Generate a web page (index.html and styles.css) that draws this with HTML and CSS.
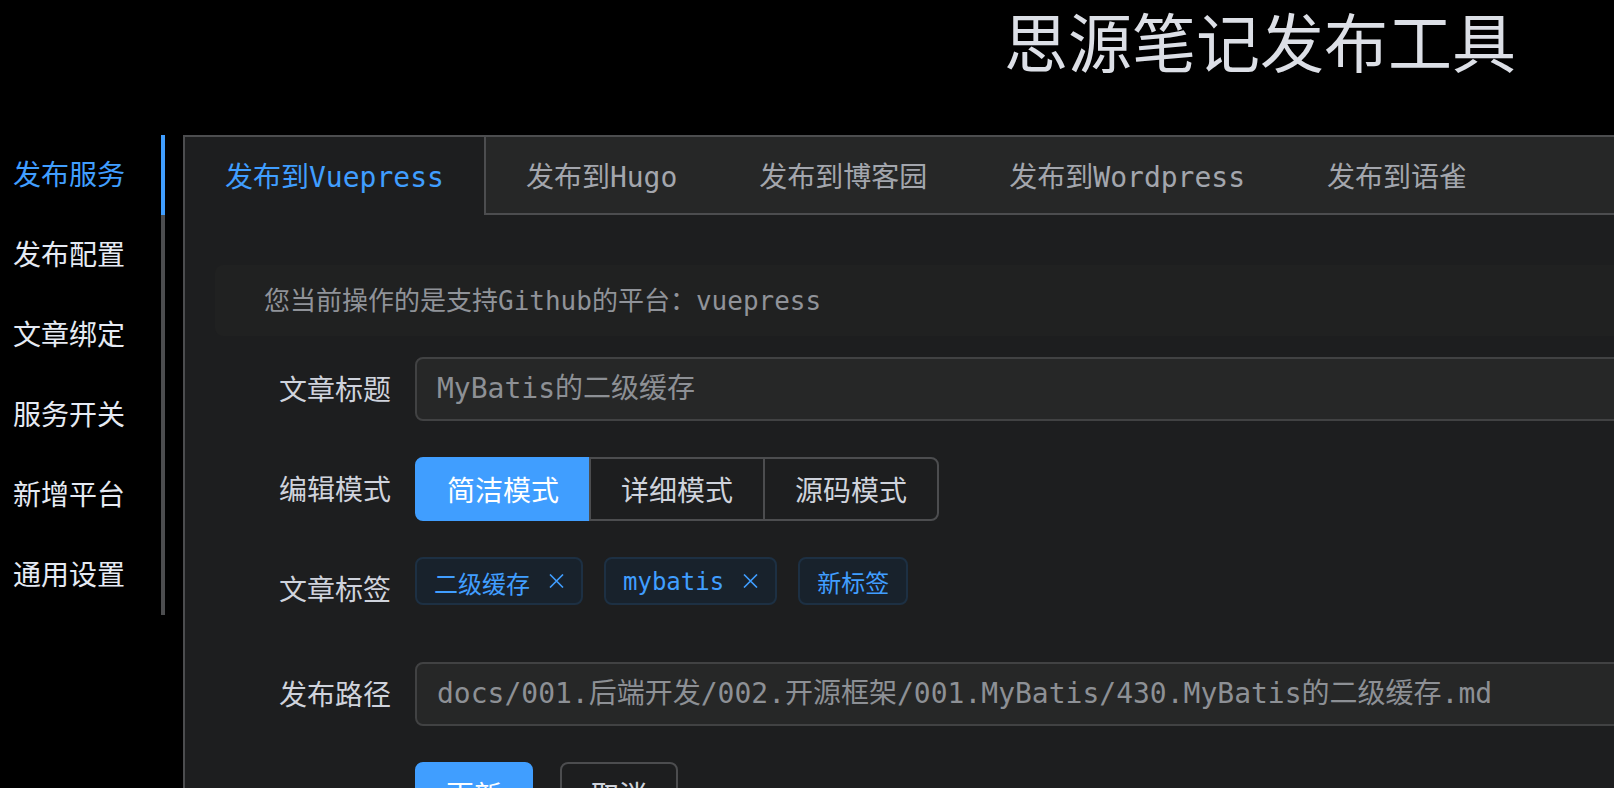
FILE: index.html
```html
<!DOCTYPE html>
<html lang="zh-CN">
<head>
<meta charset="utf-8">
<title>思源笔记发布工具</title>
<link rel="stylesheet" href="styles.css">
</head>
<body>
<header class="top">
  <h1 class="title">思源笔记发布工具</h1>
</header>
<div class="layout">
  <nav class="side">
    <div class="side-item active">发布服务</div>
    <div class="side-item">发布配置</div>
    <div class="side-item">文章绑定</div>
    <div class="side-item">服务开关</div>
    <div class="side-item">新增平台</div>
    <div class="side-item">通用设置</div>
  </nav>
  <section class="panel">
    <div class="tabs">
      <div class="tab active">发布到Vuepress</div>
      <div class="tab">发布到Hugo</div>
      <div class="tab">发布到博客园</div>
      <div class="tab">发布到Wordpress</div>
      <div class="tab">发布到语雀</div>
    </div>
    <div class="panel-body">
      <div class="alert">您当前操作的是支持Github的平台：vuepress</div>
      <div class="form">
        <div class="row">
          <div class="label">文章标题</div>
          <div class="control"><div class="input">MyBatis的二级缓存</div></div>
        </div>
        <div class="row">
          <div class="label">编辑模式</div>
          <div class="control">
            <div class="radio-group">
              <span class="radio active">简洁模式</span>
              <span class="radio">详细模式</span>
              <span class="radio">源码模式</span>
            </div>
          </div>
        </div>
        <div class="row row-tags">
          <div class="label">文章标签</div>
          <div class="control tags">
            <span class="tag">二级缓存<svg class="tag-close" viewBox="0 0 15 14" width="15" height="14"><path d="M1 0.5 L14 13.5 M14 0.5 L1 13.5" fill="none" stroke="currentColor" stroke-width="1.6"/></svg></span>
            <span class="tag">mybatis<svg class="tag-close" viewBox="0 0 15 14" width="15" height="14"><path d="M1 0.5 L14 13.5 M14 0.5 L1 13.5" fill="none" stroke="currentColor" stroke-width="1.6"/></svg></span>
            <span class="tag tag-new">新标签</span>
          </div>
        </div>
        <div class="row">
          <div class="label">发布路径</div>
          <div class="control"><div class="input">docs/001.后端开发/002.开源框架/001.MyBatis/430.MyBatis的二级缓存.md</div></div>
        </div>
        <div class="row actions">
          <span class="btn btn-primary">更新</span>
          <span class="btn">取消</span>
        </div>
      </div>
    </div>
  </section>
</div>
</body>
</html>
```

FILE: styles.css
```css
html, body {
  margin: 0;
  padding: 0;
}

body {
  background: #000;
  width: 1614px;
  height: 788px;
  overflow: hidden;
  font-family: "DejaVu Sans Mono", "Noto Sans CJK SC", monospace;
  color: #cfd3dc;
}

.top {
  height: 135px;
  box-sizing: border-box;
  padding-top: 7px;
  padding-left: 1004px;
}

.title {
  margin: 0;
  font-family: "Noto Sans CJK SC", sans-serif;
  font-weight: 400;
  font-size: 64px;
  line-height: 64px;
  color: #dcdfe6;
  white-space: nowrap;
}

.layout {
  display: flex;
  align-items: flex-start;
  gap: 18px;
}

.side {
  width: 165px;
  flex: none;
  display: flex;
  flex-direction: column;
}

.side-item {
  height: 80px;
  line-height: 76px;
  box-sizing: border-box;
  padding-left: 13px;
  border-right: 4px solid #4c4d4f;
  font-family: "Noto Sans CJK SC", sans-serif;
  font-size: 28px;
  color: #e5eaf3;
}

.side-item.active {
  color: #409eff;
  border-right-color: #409eff;
}

.panel {
  flex: none;
  width: 1700px;
  height: 700px;
  border: 2px solid #4c4d4f;
  background: #1d1e1f;
}

.tabs {
  display: flex;
  height: 76px;
  background: #262727;
  border-bottom: 2px solid #4c4d4f;
}

.tab {
  height: 76px;
  box-sizing: border-box;
  padding: 6px 40px 0 40px;
  line-height: 70px;
  border-left: 2px solid transparent;
  border-right: 2px solid transparent;
  margin-left: -2px;
  font-size: 28px;
  color: #a3a6ad;
  white-space: nowrap;
}

.tab:first-child {
  margin-left: 0;
  border-left: 0;
}

.tab.active {
  color: #409eff;
  background: #1d1e1f;
  border-right-color: #4c4d4f;
  height: 78px;
  margin-bottom: -2px;
}

.panel-body {
  padding: 50px 30px 0 30px;
}

.alert {
  height: 71px;
  box-sizing: border-box;
  display: flex;
  align-items: center;
  padding-left: 49px;
  border-radius: 8px;
  background: #202121;
  color: #909399;
  font-size: 26px;
  line-height: 36px;
  margin-bottom: 21px;
}

.form {
  display: flex;
  flex-direction: column;
}

.row {
  display: flex;
  margin-bottom: 36px;
}

.row-tags {
  margin-bottom: 41px;
}

.label {
  width: 200px;
  flex: none;
  box-sizing: border-box;
  padding-right: 24px;
  text-align: right;
  font-family: "Noto Sans CJK SC", sans-serif;
  font-size: 28px;
  line-height: 62px;
  height: 64px;
  color: #cfd3dc;
}

.control {
  flex: 1;
  display: flex;
  align-items: flex-start;
}

.input {
  flex: 1;
  height: 64px;
  box-sizing: border-box;
  border: 2px solid #414243;
  border-radius: 8px;
  background: #262727;
  padding: 0 20px;
  display: flex;
  align-items: center;
  font-size: 28px;
  line-height: 40px;
  color: #8d9095;
  white-space: nowrap;
}

.radio-group {
  display: flex;
}

.radio {
  height: 64px;
  box-sizing: border-box;
  padding: 0 30px;
  border: 2px solid #4c4d4f;
  margin-left: -2px;
  display: flex;
  align-items: center;
  font-family: "Noto Sans CJK SC", sans-serif;
  font-size: 28px;
  color: #cfd3dc;
}

.radio:first-child {
  margin-left: 0;
  border-radius: 8px 0 0 8px;
}

.radio:last-child {
  border-radius: 0 8px 8px 0;
}

.radio.active {
  background: #409eff;
  border-color: #409eff;
  color: #fff;
}

.tags {
  gap: 21px;
}

.tag {
  height: 48px;
  box-sizing: border-box;
  display: inline-flex;
  align-items: center;
  padding: 2px 17px 0 17px;
  border: 2px solid #1d3043;
  border-radius: 8px;
  background: #18222c;
  color: #409eff;
  font-size: 24px;
  white-space: nowrap;
}

.tag-close {
  margin-left: 19px;
  margin-top: -2px;
  flex: none;
}

.tag-new {
  padding: 0 17px;
}

.actions {
  padding-left: 200px;
  gap: 27px;
}

.btn {
  height: 64px;
  box-sizing: border-box;
  padding: 0 29px;
  border: 2px solid #4c4d4f;
  border-radius: 8px;
  display: inline-flex;
  align-items: center;
  font-family: "Noto Sans CJK SC", sans-serif;
  font-size: 28px;
  color: #cfd3dc;
}

.btn-primary {
  background: #409eff;
  border-color: #409eff;
  color: #fff;
}
```
